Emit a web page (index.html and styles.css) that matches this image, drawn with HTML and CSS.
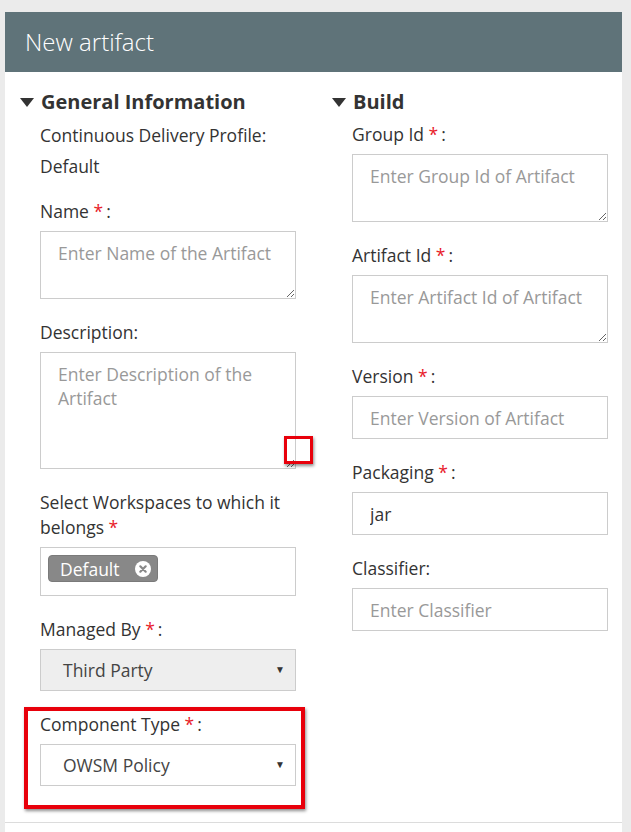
FILE: index.html
```html
<!DOCTYPE html>
<html>
<head>
<meta charset="utf-8">
<link rel="stylesheet" href="styles.css">
</head>
<body>
<div class="panel">
  <div class="panel-header">New artifact</div>
  <div class="panel-body">
    <div class="col">
      <h3 class="section-title"><span class="caret"></span>General Information</h3>
      <div class="field">
        <div class="label">Continuous Delivery Profile:</div>
        <div class="value">Default</div>
      </div>
      <div class="field">
        <div class="label">Name <span class="req">*</span>:</div>
        <textarea class="box ta-short" placeholder="Enter Name of the Artifact"></textarea>
      </div>
      <div class="field">
        <div class="label">Description:</div>
        <div class="ta-wrap">
          <textarea class="box ta-tall" placeholder="Enter Description of the Artifact"></textarea>
          <div class="mark mark-grip"></div>
        </div>
      </div>
      <div class="field">
        <div class="label label-wrap">Select Workspaces to which it belongs&nbsp;<span class="req">*</span></div>
        <div class="box multi">
          <span class="chip">Default
            <svg class="chip-x" width="16" height="16" viewBox="0 0 16 16"><circle cx="8" cy="8" r="8" fill="#fff"/><path d="M5.3 5.3 L10.7 10.7 M10.7 5.3 L5.3 10.7" stroke="#888" stroke-width="2.2" stroke-linecap="round"/></svg>
          </span>
        </div>
      </div>
      <div class="field">
        <div class="label">Managed By <span class="req">*</span>:</div>
        <div class="box select disabled"><span>Third Party</span><span class="arrow">▼</span></div>
      </div>
      <div class="field field-marked">
        <div class="mark mark-field"></div>
        <div class="label">Component Type <span class="req">*</span>:</div>
        <div class="box select"><span>OWSM Policy</span><span class="arrow">▼</span></div>
      </div>
    </div>
    <div class="col col-right">
      <h3 class="section-title"><span class="caret"></span>Build</h3>
      <div class="field">
        <div class="label">Group Id <span class="req">*</span>:</div>
        <textarea class="box ta-short" placeholder="Enter Group Id of Artifact"></textarea>
      </div>
      <div class="field">
        <div class="label">Artifact Id <span class="req">*</span>:</div>
        <textarea class="box ta-short" placeholder="Enter Artifact Id of Artifact"></textarea>
      </div>
      <div class="field">
        <div class="label">Version <span class="req">*</span>:</div>
        <input class="box input" placeholder="Enter Version of Artifact">
      </div>
      <div class="field">
        <div class="label">Packaging <span class="req">*</span>:</div>
        <input class="box input" value="jar">
      </div>
      <div class="field">
        <div class="label">Classifier:</div>
        <input class="box input" placeholder="Enter Classifier">
      </div>
    </div>
  </div>
</div>
</body>
</html>
```

FILE: styles.css
```css
html, body {
  margin: 0;
  padding: 0;
}
body {
  background: #ebebeb;
  font-family: "Open Sans", "Liberation Sans", sans-serif;
  color: #333;
  width: 631px;
  height: 832px;
  overflow: hidden;
}
.panel {
  margin: 12px 0 0 5px;
  width: 617px;
  height: 820px;
  background: #fff;
}
.panel-header {
  background: #5f7379;
  color: #fff;
  height: 60px;
  line-height: 60px;
  padding-left: 20px;
  font-size: 24px;
  font-weight: 300;
}
.panel-body {
  display: grid;
  grid-template-columns: 312px 1fr;
  padding: 17px 0 0 15px;
  height: 751px;
  border-bottom: 1px solid #dcdcdc;
  box-sizing: border-box;
}
.section-title {
  margin: 0 0 8px;
  font-size: 20px;
  line-height: 26px;
  font-weight: 700;
  color: #333;
  display: flex;
  align-items: center;
}
.col-right .section-title {
  margin-bottom: 7px;
}
.caret {
  display: inline-block;
  width: 0;
  height: 0;
  border-left: 7px solid transparent;
  border-right: 7px solid transparent;
  border-top: 9px solid #333;
  margin-right: 7px;
}
.field {
  margin-left: 20px;
  width: 256px;
  margin-bottom: 21px;
  position: relative;
}
.label {
  font-size: 17.5px;
  line-height: 24px;
  margin-bottom: 8px;
  white-space: nowrap;
}
.label-wrap {
  line-height: 25px;
  margin-bottom: 7px;
  white-space: normal;
}
.value {
  font-size: 17.5px;
  line-height: 24px;
  margin-top: -1px;
}
.req {
  color: #e8202a;
  margin-right: 3px;
}
.box {
  display: block;
  box-sizing: border-box;
  width: 256px;
  border: 1px solid #ccc;
  background: #fff;
  font-family: "Open Sans", "Liberation Sans", sans-serif;
  font-size: 17.5px;
  color: #333;
  margin: 0;
  outline: none;
  border-radius: 0;
}
textarea.box {
  padding: 9px 17px;
  line-height: 24px;
  resize: both;
}
.ta-short { height: 68px; }
.ta-tall { height: 117px; }
.box::placeholder {
  color: #999;
  opacity: 1;
}
.input {
  height: 43px;
  padding: 0 17px;
}
.ta-wrap {
  position: relative;
}
.multi {
  height: 49px;
  padding: 7px 7px;
}
.chip {
  display: inline-flex;
  align-items: center;
  height: 27px;
  width: 110px;
  box-sizing: border-box;
  background: #888;
  border: 1px solid #7a7a7a;
  border-radius: 4px;
  color: #fff;
  font-size: 17.5px;
  padding-left: 11px;
}
.chip-x {
  margin-left: 15px;
}
.select {
  height: 42px;
  display: flex;
  align-items: center;
  justify-content: space-between;
  padding: 0 10px 0 22px;
  color: #444;
  font-size: 17.5px;
}
.select.disabled {
  background: #eee;
}
.arrow {
  font-size: 10px;
  color: #333;
  margin-top: -2px;
}
.mark {
  position: absolute;
  border: 3px solid #e8000b;
  box-shadow: 1px 2px 3px rgba(0,0,0,0.45);
  pointer-events: none;
}
.mark-grip {
  left: 244px;
  top: 84px;
  width: 23px;
  height: 22px;
}
.mark-field {
  left: -16px;
  top: -5px;
  width: 273px;
  height: 94px;
  border-width: 4px;
}
```
